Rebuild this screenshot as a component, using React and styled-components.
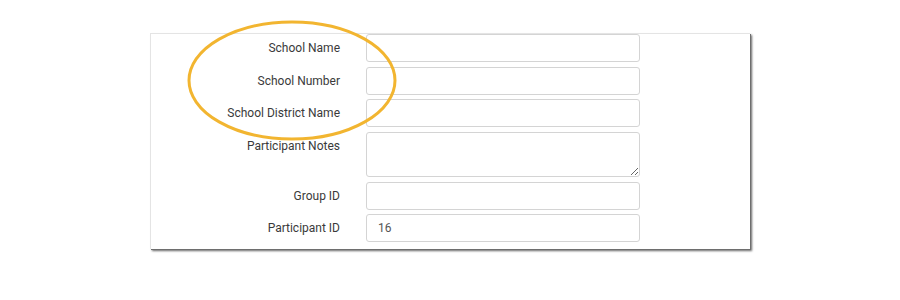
import React from 'react'
import styled, { createGlobalStyle } from 'styled-components'

const GlobalStyle = createGlobalStyle`
  body {
    margin: 0;
    background: #fff;
    font-family: Roboto, "Liberation Sans", Arial, sans-serif;
  }
`

const Page = styled.div`
  padding-top: 33px;
  height: 267px;
`

const Card = styled.div`
  position: relative;
  width: 600px;
  margin: 0 auto;
  box-sizing: border-box;
  padding: 0 0 7px;
  background: #fff;
  border-top: 1px solid #e4e4e4;
  border-left: 1px solid #e4e4e4;
  box-shadow: 1px 1px 0 #6e6e6e, 2px 2px 2px rgba(0, 0, 0, .6);
`

const Form = styled.div`
  display: grid;
  grid-template-columns: 189px 274px;
  column-gap: 26px;
  row-gap: 4.5px;
`

const Label = styled.label`
  padding-top: 7px;
  font-size: 12px;
  line-height: 14px;
  color: #3a3a3a;
  text-align: right;
`

const Input = styled.input`
  display: block;
  box-sizing: border-box;
  width: 100%;
  height: 28px;
  margin: 0;
  padding: 0 11px;
  font-family: inherit;
  font-size: 12px;
  color: #555;
  background: #fff;
  border: 1px solid #d4d4d4;
  border-radius: 3px;
  outline: none;
`

const TextArea = styled.textarea`
  display: block;
  box-sizing: border-box;
  width: 100%;
  height: 45.5px;
  margin: 0;
  padding: 6px 11px;
  font-family: inherit;
  font-size: 12px;
  border: 1px solid #d4d4d4;
  border-radius: 3px;
  outline: none;
`

// highlight ring drawn over the first three labels
const Ring = styled.svg`
  position: absolute;
  left: 36px;
  top: -14px;
  overflow: visible;
  pointer-events: none;
`

const fields = [
  { label: 'School Name' },
  { label: 'School Number' },
  { label: 'School District Name' },
  { label: 'Participant Notes', multi: true },
  { label: 'Group ID' },
  { label: 'Participant ID', value: '16' },
]

export default function App() {
  return (
    <Page>
      <GlobalStyle />
      <Card>
        <Form>
          {fields.map(f => (
            <React.Fragment key={f.label}>
              <Label>{f.label}</Label>
              {f.multi ? <TextArea /> : <Input defaultValue={f.value || ''} />}
            </React.Fragment>
          ))}
        </Form>
        <Ring width="210" height="121" viewBox="0 0 210 121">
          <ellipse cx="105" cy="60.5" rx="103" ry="58.5" fill="none" stroke="#F2B530" strokeWidth="3" />
        </Ring>
      </Card>
    </Page>
  )
}
